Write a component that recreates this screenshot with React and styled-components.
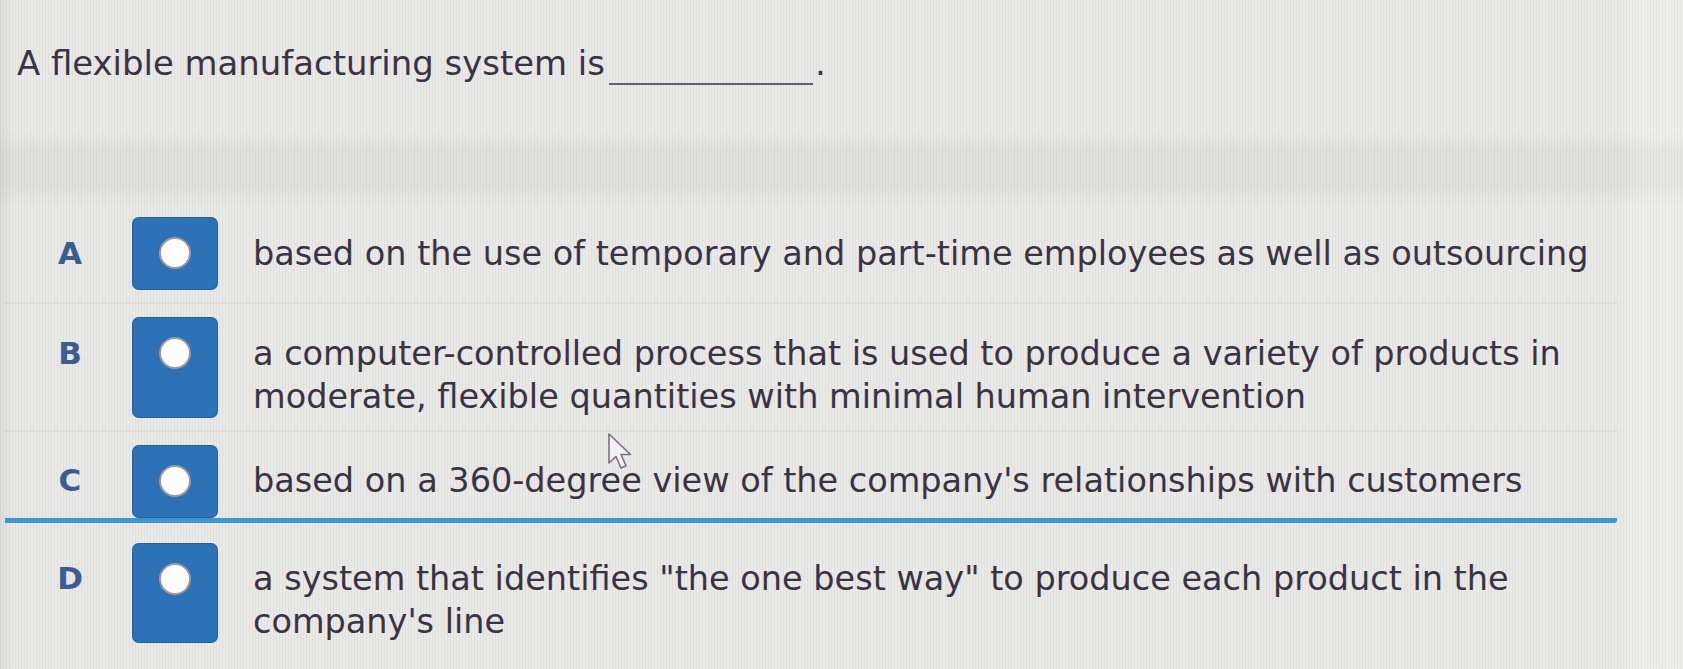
import React from "react";
import styled, { createGlobalStyle } from "styled-components";

const GlobalStyle = createGlobalStyle`
  html, body {
    margin: 0;
    padding: 0;
  }
  body {
    background: #e8e8e6;
    font-family: "DejaVu Sans", Verdana, sans-serif;
    color: #3a3342;
  }
`;

const Page = styled.div`
  position: relative;
  width: 1683px;
  min-height: 669px;
  overflow: hidden;
  background-color: #e8e8e6;
  background-image: repeating-linear-gradient(
      90deg,
      rgba(0, 0, 0, 0.035) 0 1px,
      rgba(255, 255, 255, 0.05) 1px 3px
    ),
    linear-gradient(90deg, rgba(0, 0, 0, 0.06) 0, rgba(0, 0, 0, 0) 12px),
    linear-gradient(90deg, rgba(0, 0, 0, 0) 1620px, rgba(255, 255, 255, 0.25) 1640px);
`;

const Question = styled.div`
  box-sizing: border-box;
  height: 134px;
  padding: 44px 0 0 17px;
  font-size: 33.9px;
  line-height: 40px;
  color: #3a3342;
`;

const Blank = styled.span`
  display: inline-block;
  width: 204px;
  margin-left: 4px;
  margin-right: 2px;
  border-bottom: 2px solid #5c5f70;
  vertical-align: -10px;
`;

const Band = styled.div`
  height: 70px;
  background: linear-gradient(
    to bottom,
    rgba(0, 0, 0, 0.005) 0,
    rgba(0, 0, 0, 0.035) 25%,
    rgba(0, 0, 0, 0.035) 75%,
    rgba(0, 0, 0, 0.005) 100%
  );
`;

const List = styled.div`
  margin-left: 5px;
  width: 1612px;
`;

const Row = styled.div`
  display: flex;
  align-items: stretch;
  padding: ${(p) => (p.$focused ? "13px 0 0" : "13px 0 12px")};
  border-bottom: ${(p) =>
    p.$focused ? "5px solid #3f97cf" : p.$last ? "none" : "2px solid rgba(0, 0, 0, 0.04)"};
  border-radius: ${(p) => (p.$focused ? "0 0 3px 0" : "0")};
  ${(p) => (p.$spaced ? "padding-top: 20px;" : "")}
`;

const Letter = styled.div`
  flex-shrink: 0;
  box-sizing: border-box;
  width: 127px;
  padding: 14.5px 0 0 3px;
  text-align: center;
  font-size: 31px;
  font-weight: bold;
  line-height: 43px;
  color: #3d5c91;
`;

const RadioBox = styled.div`
  flex-shrink: 0;
  box-sizing: border-box;
  width: 86px;
  min-height: 73px;
  padding-top: 20px;
  display: flex;
  justify-content: center;
  align-items: flex-start;
  background: #2d71b7;
  border-radius: 7px;
  box-shadow: inset 0 0 0 1px rgba(20, 55, 100, 0.3);
`;

const Dot = styled.span`
  box-sizing: border-box;
  width: 32px;
  height: 32px;
  border-radius: 50%;
  background: #ffffff;
  border: 2px solid #a3979f;
`;

const Label = styled.div`
  flex: 1;
  margin-left: 35px;
  padding-top: 14.5px;
  font-size: 33.5px;
  line-height: 43px;
  color: #3a3342;
`;

const Cursor = styled.svg`
  position: absolute;
  left: 607px;
  top: 432px;
  width: 28px;
  height: 40px;
`;

const options = [
  { key: "A", text: "based on the use of temporary and part-time employees as well as outsourcing" },
  {
    key: "B",
    text: "a computer-controlled process that is used to produce a variety of products in moderate, flexible quantities with minimal human intervention",
  },
  { key: "C", text: "based on a 360-degree view of the company's relationships with customers", focused: true },
  {
    key: "D",
    text: 'a system that identifies "the one best way" to produce each product in the company\'s line',
    spaced: true,
    last: true,
  },
];

export default function App() {
  return (
    <>
      <GlobalStyle />
      <Page>
        <Question>
          A flexible manufacturing system is
          <Blank />.
        </Question>
        <Band />
        <List>
          {options.map((o) => (
            <Row key={o.key} $focused={o.focused} $spaced={o.spaced} $last={o.last}>
              <Letter>{o.key}</Letter>
              <RadioBox>
                <Dot />
              </RadioBox>
              <Label>{o.text}</Label>
            </Row>
          ))}
        </List>
        <Cursor viewBox="0 0 28 40">
          <path
            d="M2 2 L2 31 L9 24.5 L14 36 L19 33.8 L14 22.5 L23.5 22.5 Z"
            fill="#f2f1f3"
            stroke="#7a6f86"
            strokeWidth="1.6"
            strokeLinejoin="round"
          />
        </Cursor>
      </Page>
    </>
  );
}
